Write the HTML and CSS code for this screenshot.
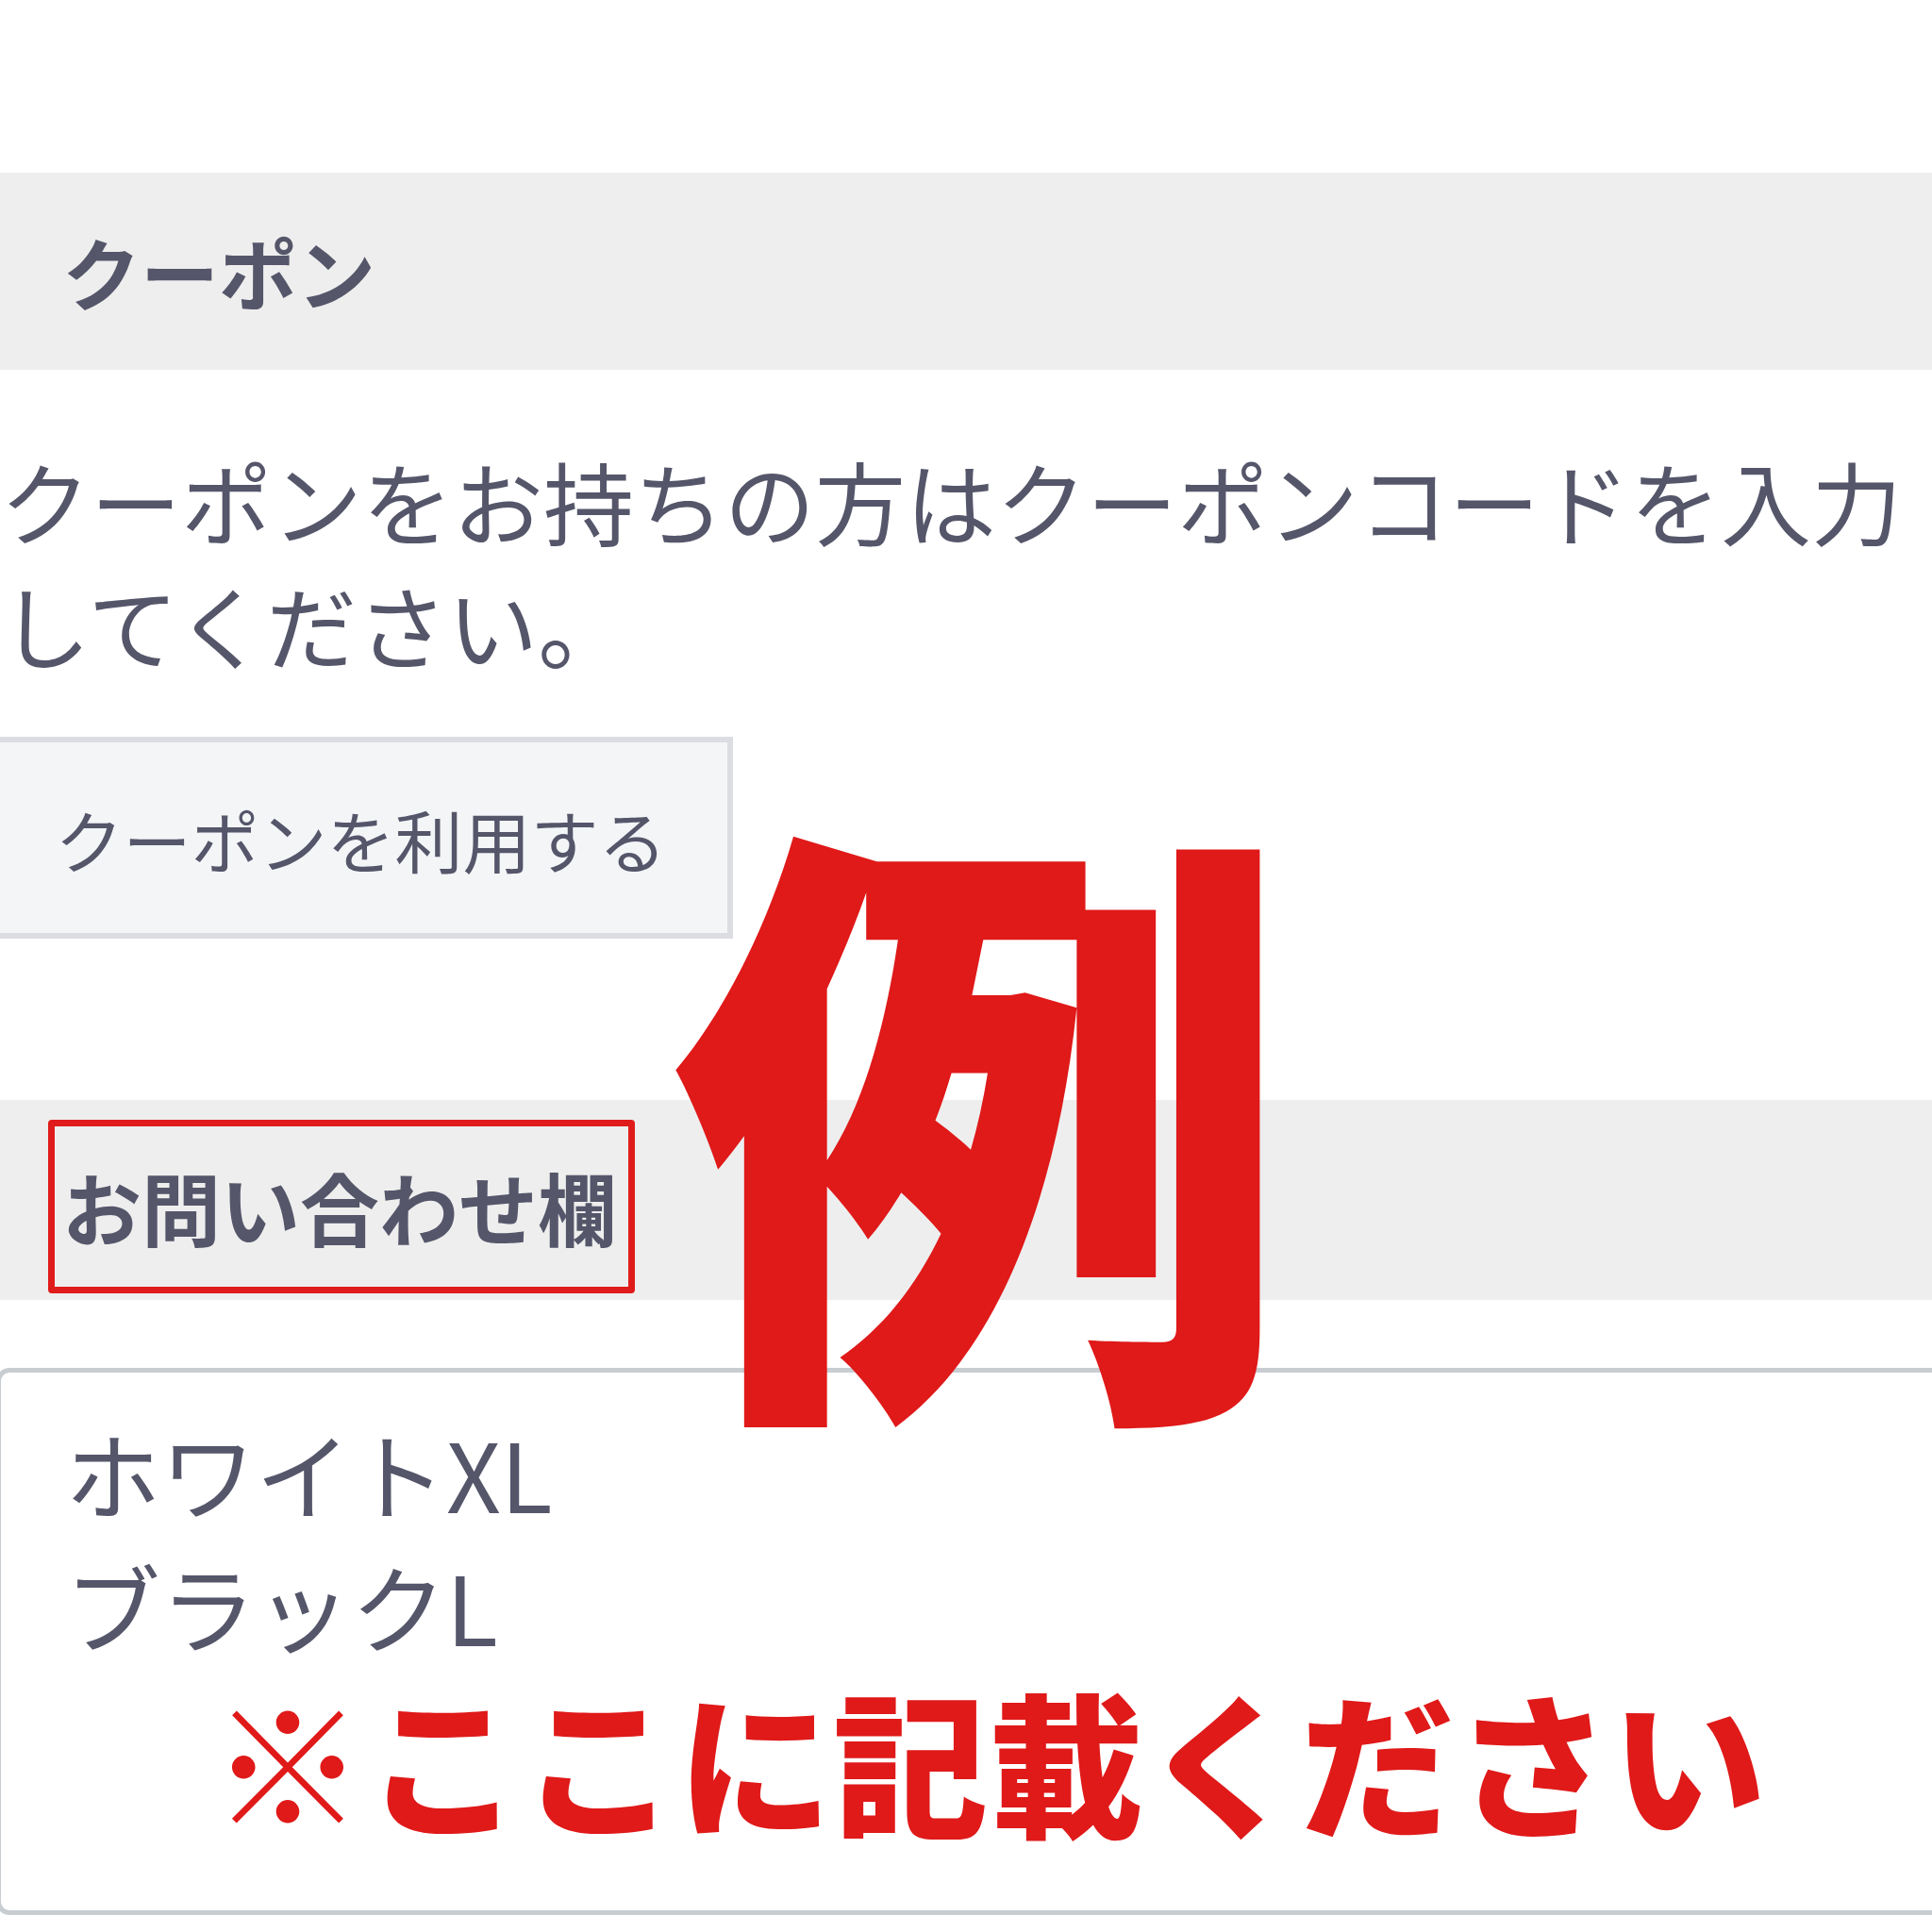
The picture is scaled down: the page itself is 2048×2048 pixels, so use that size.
FILE: index.html
```html
<!DOCTYPE html>
<html lang="ja">
<head>
<meta charset="utf-8">
<title>クーポン</title>
<link rel="stylesheet" href="styles.css">
</head>
<body>
<div class="page">
  <section class="band band-coupon">
    <h2 class="band-title">クーポン</h2>
  </section>
  <p class="lead">クーポンをお持ちの方はクーポンコードを入力してください。</p>
  <button class="coupon-btn" type="button">クーポンを利用する</button>
  <section class="band band-inquiry">
    <h2 class="band-title boxed">お問い合わせ欄</h2>
  </section>
  <div class="memo">
    <p class="memo-line">ホワイトXL</p>
    <p class="memo-line">ブラックL</p>
    <p class="note">※ここに記載ください</p>
  </div>
  <div class="stamp">例</div>
</div>
</body>
</html>
```
FILE: styles.css
```css
html, body {
  margin: 0;
  padding: 0;
  background: #ffffff;
}
body {
  width: 2048px;
  height: 2048px;
  overflow: hidden;
  font-family: "Noto Sans CJK JP", "Noto Sans", sans-serif;
  color: #55566a;
}
.page {
  position: relative;
  width: 2048px;
  height: 2048px;
  padding-top: 183px;
  box-sizing: border-box;
  display: flex;
  flex-direction: column;
  align-items: flex-start;
}
.band {
  width: 100%;
  background: #eeeeee;
  box-sizing: border-box;
  display: flex;
}
.band-coupon {
  height: 209px;
  align-items: center;
  padding-left: 66px;
}
.band-title {
  margin: 0;
  font-size: 83px;
  font-weight: 700;
  line-height: 1;
  color: #55566a;
}
.lead {
  margin: 72px 0 0 0;
  font-size: 96px;
  line-height: 131px;
  font-weight: 400;
  width: 2048px;
}
.coupon-btn {
  margin: 55px 0 0 -6px;
  width: 783px;
  height: 214px;
  background: #f4f5f7;
  border: 6px solid #dcdde2;
  font-family: inherit;
  font-size: 72px;
  font-weight: 400;
  color: #55566a;
  padding: 0 6px 0 0;
  text-align: center;
}
.band-inquiry {
  margin-top: 171px;
  height: 212px;
  padding: 21px 0 0 51px;
  align-items: flex-start;
}
.boxed {
  font-size: 84px;
  height: 184px;
  box-sizing: border-box;
  border: 7px solid #e01b1b;
  border-radius: 4px;
  padding: 0 12px 0 8px;
  display: flex;
  align-items: center;
}
.memo {
  margin: 72px 0 0 -4px;
  width: 2080px;
  height: 580px;
  box-sizing: border-box;
  border: 5px solid #c8cdd1;
  border-radius: 14px;
  padding: 35px 0 0 68px;
}
.memo-line {
  margin: 0;
  font-size: 101px;
  font-weight: 400;
  line-height: 141px;
  color: #55566a;
}
.note {
  margin: 7px 0 0 154px;
  font-size: 164px;
  line-height: 170px;
  font-weight: 900;
  color: #e01919;
  letter-spacing: 1px;
}
.stamp {
  position: absolute;
  left: 711px;
  top: 833px;
  font-size: 660px;
  line-height: 1;
  font-weight: 900;
  color: #e01919;
}
```
